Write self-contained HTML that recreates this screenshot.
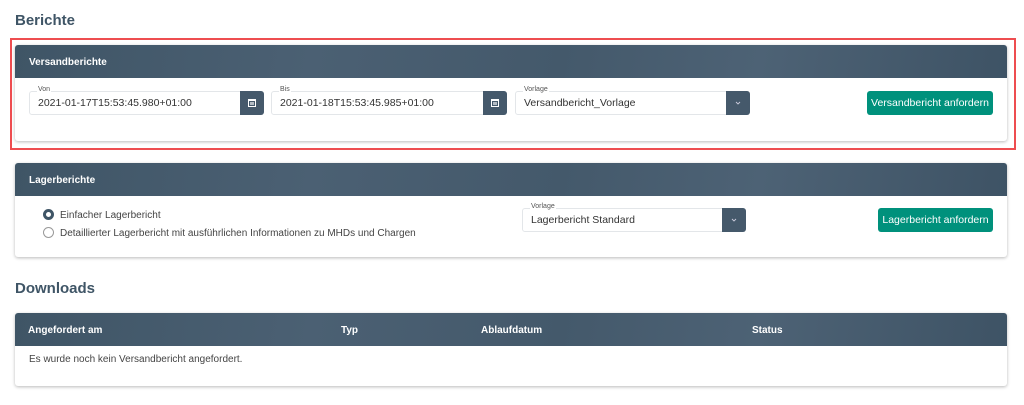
<!DOCTYPE html>
<html><head><meta charset="utf-8"><style>
*{box-sizing:border-box;margin:0;padding:0}
body{width:1024px;height:405px;background:#fff;font-family:"Liberation Sans",sans-serif;color:#3b4a56;position:relative;overflow:hidden}
.abs{position:absolute}
h2{position:absolute;left:15px;font-size:15px;font-weight:bold;color:#3f5566}
.card{position:absolute;left:15px;width:992px;background:#fff;border-radius:3px;box-shadow:0 1px 3px rgba(0,0,0,.28)}
.hd{height:33px;background:linear-gradient(100deg,#3f5566 0%,#4b6073 30%,#44596b 55%,#4d6275 75%,#3e5365 100%);border-radius:3px 3px 0 0;color:#fff;font-size:10px;font-weight:bold;padding:12px 14px;position:relative}
.inp{position:absolute;height:24px;border:1px solid #e3e6e9;border-radius:3px;background:#fff;font-size:10.5px;color:#333;padding:5px 8px}
.inp .lb{position:absolute;top:-6px;left:7px;background:#fff;font-size:7px;color:#555;padding:0 1px;line-height:8px}
.btnic{position:absolute;right:-1px;top:-1px;width:24px;height:24px;background:#45596b;border-radius:0 3px 3px 0}
.go{position:absolute;height:24px;background:#00917c;color:#fff;font-size:10.5px;border-radius:3px;text-align:center;line-height:25px}
.rad{position:absolute;left:60px;font-size:10px;color:#444}
.rad i{position:absolute;left:-17px;top:-1px;width:11px;height:11px;border-radius:50%;border:1px solid #999;background:#fff}
.rad i.on{border:3px solid #3f5566}
</style></head><body>
<h2 style="top:12px">Berichte</h2>
<div class="abs" style="left:10px;top:38px;width:1006px;height:112px;border:2px solid #ee4d50"></div>
<div class="card" style="top:45px;height:96px">
 <div class="hd">Versandberichte</div>
</div>
<div class="inp" style="left:29px;top:91px;width:235px"><span class="lb">Von</span>2021-01-17T15:53:45.980+01:00<div class="btnic"><svg width="24" height="24"><rect x="8.5" y="8.5" width="7" height="7" fill="none" stroke="#fff"/><rect x="8" y="8" width="8" height="2" fill="#fff"/><rect x="10" y="11" width="4" height="3" fill="#fff" opacity=".6"/></svg></div></div>
<div class="inp" style="left:271px;top:91px;width:236px"><span class="lb">Bis</span>2021-01-18T15:53:45.985+01:00<div class="btnic"><svg width="24" height="24"><rect x="8.5" y="8.5" width="7" height="7" fill="none" stroke="#fff"/><rect x="8" y="8" width="8" height="2" fill="#fff"/><rect x="10" y="11" width="4" height="3" fill="#fff" opacity=".6"/></svg></div></div>
<div class="inp" style="left:515px;top:91px;width:235px"><span class="lb">Vorlage</span>Versandbericht_Vorlage<div class="btnic"><svg width="24" height="24"><path d="M10 11l2 2 2-2" fill="none" stroke="#ccd" stroke-width=".9"/></svg></div></div>
<div class="go" style="left:867px;top:91px;width:126px">Versandbericht anfordern</div>

<div class="card" style="top:163px;height:94px">
 <div class="hd">Lagerberichte</div>
</div>
<div class="rad" style="top:210px"><i class="on"></i>Einfacher Lagerbericht</div>
<div class="rad" style="top:228px"><i></i>Detaillierter Lagerbericht mit ausführlichen Informationen zu MHDs und Chargen</div>
<div class="inp" style="left:522px;top:208px;width:224px"><span class="lb">Vorlage</span>Lagerbericht Standard<div class="btnic"><svg width="24" height="24"><path d="M10 11l2 2 2-2" fill="none" stroke="#ccd" stroke-width=".9"/></svg></div></div>
<div class="go" style="left:878px;top:208px;width:115px">Lagerbericht anfordern</div>

<h2 style="top:280px">Downloads</h2>
<div class="card" style="top:313px;height:73px">
 <div class="hd"><span class="abs" style="left:13px;top:12px">Angefordert am</span><span class="abs" style="left:326px;top:12px">Typ</span><span class="abs" style="left:466px;top:12px">Ablaufdatum</span><span class="abs" style="left:737px;top:12px">Status</span></div>
 <div class="abs" style="left:14px;top:41px;font-size:10px;color:#444">Es wurde noch kein Versandbericht angefordert.</div>
</div>
</body></html>
